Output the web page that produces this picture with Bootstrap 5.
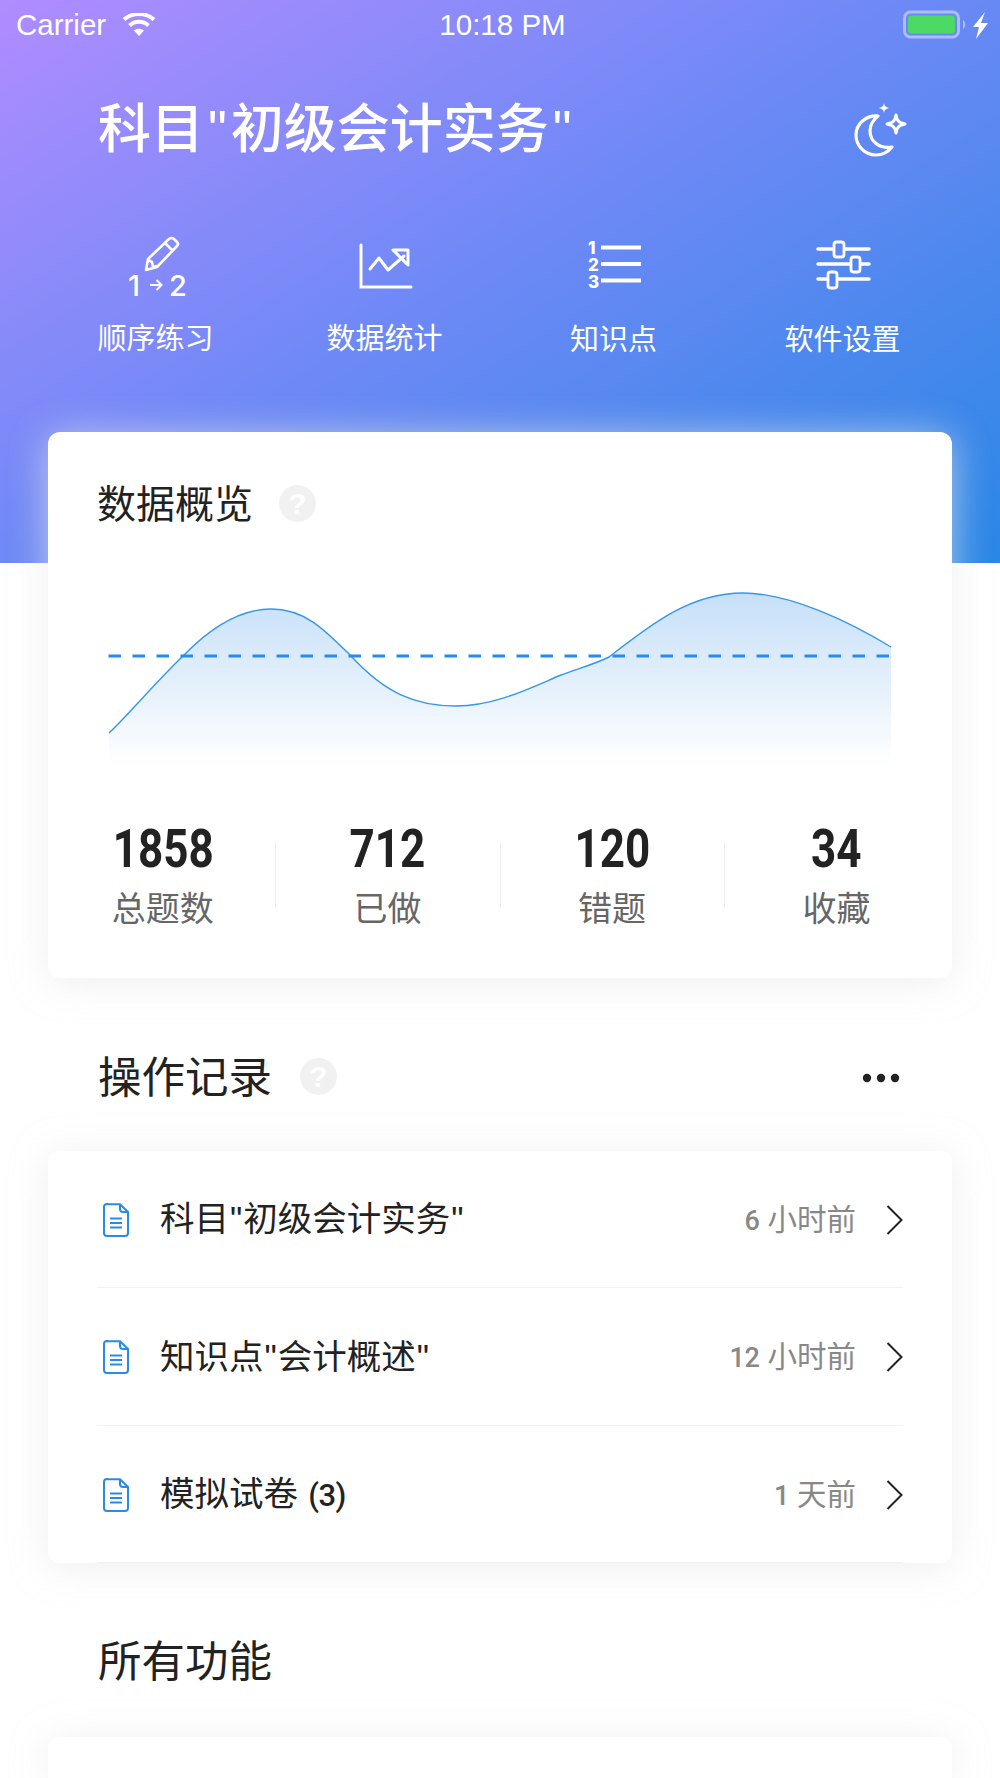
<!DOCTYPE html>
<html lang="zh">
<head>
<meta charset="utf-8">
<title>初级会计实务</title>
<link href="https://cdn.jsdelivr.net/npm/bootstrap@5.3.0/dist/css/bootstrap.min.css" rel="stylesheet">
<style>
html,body{height:1778px;overflow:hidden;background:#fff}
body{font-family:"Liberation Sans","Noto Sans CJK SC",sans-serif;color:#222}
.hero{height:563px;background:linear-gradient(148deg,#b08cff 0%,#7089f6 46%,#2a87e6 100%);color:#fff}
.sbar{height:50px;padding:0 11px 0 16px;font-family:"Liberation Sans",sans-serif;font-size:29.500px}
.sbar-left{width:300px}.sbar-right{width:300px}
.ttl-row{padding:0 92px 0 98px;margin-top:50px;height:60px}
.ttl{font-size:53px;font-weight:500;line-height:60px;margin:0;white-space:nowrap}
.qt{margin:0 4px}
.nav-cols{padding:0 41px;margin-top:76px}
.nav-col{width:229px;text-align:center}
.nav-col svg{display:block;margin:0 auto 13px}
.nav-label{font-size:29px;line-height:38px}
.nav-low{margin-top:4px}
.pane{margin:0 48px;border:0;border-radius:12px;background:#fff;box-shadow:0 4px 38px rgba(232,232,232,.7)}
.pane-one{margin-top:-131px;height:546px;padding:52px 0 0}
.h-one{font-size:39px;line-height:42px;margin:0;font-weight:400}
.qmark{width:37px;height:37px;border-radius:50%;background:#f1f1f1;color:#fff;font-weight:700;font-size:30px;line-height:37px;text-align:center;font-family:"Liberation Sans",sans-serif;margin-top:-3px}
.pane-head{padding-left:49px;gap:26px}
.chart{display:block;margin:64px 0 0 0}
.stat-col{width:224.600px;text-align:center;position:relative}
.stat-col+.stat-col::before{content:"";position:absolute;left:0;top:22px;height:65px;width:1px;background:#eee}
.stat-num{font-family:Roboto,sans-serif;font-weight:700;font-size:53px;line-height:58px;color:#222;transform:scaleX(.83)}
.stat-lbl{font-size:34px;line-height:44px;color:#666;margin-top:9px}
.stats{margin-top:50px;margin-left:2.500px}
.sec{padding:0 100px 0 98px;height:44px}
.sec-one{margin-top:78px;margin-bottom:51px}
.sec-two{margin-top:77px;margin-bottom:53px}
.sec-t{font-size:43.500px;line-height:44px;margin:0;font-weight:400;white-space:nowrap}
.sec-gap{gap:28px}
.pane-two{height:412px;overflow:hidden}
.rec{height:137.300px;padding:0 49px;background:transparent}
.rec-in{height:137.300px;border-bottom:1px solid #f2f2f2;padding:2px 0 0 6px}
.rec-name{font-size:34.500px;margin-left:31px;color:#222}
.rqt{margin:0 1px}
.rec-time{font-size:29.500px;color:#888;margin-right:30px;white-space:nowrap}
.dgt{font-family:Roboto,sans-serif;font-weight:500;font-size:27px;letter-spacing:-.5px}
.par{font-family:Roboto,sans-serif;font-weight:500;font-size:31px;margin-left:3px;letter-spacing:-.5px}
.pane-three{height:41px;border-bottom-left-radius:0;border-bottom-right-radius:0}
</style>
</head>
<body>
<header class="hero">
  <div class="sbar d-flex align-items-center justify-content-between">
    <div class="sbar-left d-flex align-items-center gap-3">
      <span>Carrier</span>
      <svg width="34" height="24" viewBox="0 0 34 24"><path d="M17 23 12 17.500C15 15 19 15 22 17.500Z" fill="#fff"/><path d="M7.500 12.500C13 7.500 21 7.500 26.500 12.500" fill="none" stroke="#fff" stroke-width="4"/><path d="M2 6.500C10.500-.8 23.500-.8 32 6.500" fill="none" stroke="#fff" stroke-width="4"/></svg>
    </div>
    <div>10:18 PM</div>
    <div class="sbar-right d-flex align-items-center justify-content-end">
      <svg width="86" height="30" viewBox="0 0 86 30"><rect x="1.500" y="2" width="54" height="25" rx="6" fill="none" stroke="#fff" stroke-opacity=".45" stroke-width="3"/><rect x="5" y="5.500" width="47" height="18" rx="3" fill="#4cd964"/><path d="M60 10c3 1 3 8 0 9z" fill="#fff" fill-opacity=".45"/><path d="M82 2 70 17h6l-3 12 12-16h-7z" fill="#fff"/></svg>
    </div>
  </div>
  <div class="ttl-row d-flex justify-content-between align-items-center">
    <h1 class="ttl">科目<span class="qt">"</span>初级会计实务<span class="qt">"</span></h1>
    <svg width="56" height="54" viewBox="0 0 56 54"><path d="M26 13C14 12 4 21 4 32c0 11 9 20 20 20 7 0 12-3 16-8-12 2-22-5-22-16 0-6 3-11 8-15z" fill="none" stroke="#fff" stroke-width="3.200" stroke-linejoin="round"/><path d="M44 12c1 6 3 8 9 9-6 1-8 3-9 9-1-6-3-8-9-9 6-1 8-3 9-9z" fill="none" stroke="#fff" stroke-width="3" stroke-linejoin="round"/><path d="M32 0c.6 3 1.500 4 5 5-3.500 1-4.400 2-5 5-.6-3-1.500-4-5-5 3.500-1 4.400-2 5-5z" fill="#fff"/></svg>
  </div>
  <div class="nav-cols d-flex">
    <div class="nav-col">
      <svg width="90" height="71" viewBox="0 0 90 71"><path d="M35 34 37 23 58 3Q61 1 63 3L66 6Q68 8 66 10L46 31ZM54 7 62 15M37 24 41 26 42 31 46 30" fill="none" stroke="#fff" stroke-width="2.600" stroke-linejoin="round"/><text x="17" y="60" font-family="Inter,sans-serif" font-size="29" font-weight="500" fill="#fff">1</text><path d="M39 49H50M45.500 44 50.500 49 45.500 54" fill="none" stroke="#fff" stroke-width="2"/><text x="58" y="60" font-family="Inter,sans-serif" font-size="29" font-weight="500" fill="#fff">2</text></svg>
      <div class="nav-label nav-low">顺序练习</div>
    </div>
    <div class="nav-col">
      <svg width="60" height="71" viewBox="0 0 60 71"><path d="M6 9V51H56" fill="none" stroke="#fff" stroke-width="3" stroke-linecap="round"/><path d="M15 33 24 22 33 34 49 20" fill="none" stroke="#fff" stroke-width="3" stroke-linecap="round" stroke-linejoin="round"/><path d="M38 14H53V29Z" fill="none" stroke="#fff" stroke-width="3" stroke-linejoin="round"/></svg>
      <div class="nav-label nav-low">数据统计</div>
    </div>
    <div class="nav-col">
      <svg width="60" height="72" viewBox="0 0 60 72"><text x="4" y="18" font-family="Inter,sans-serif" font-size="17" font-weight="800" fill="#fff">1</text><text x="4" y="35" font-family="Inter,sans-serif" font-size="17" font-weight="800" fill="#fff">2</text><text x="4" y="52" font-family="Inter,sans-serif" font-size="17" font-weight="800" fill="#fff">3</text><path d="M17 11.500H57M17 28H57M17 44.500H57" stroke="#fff" stroke-width="4"/></svg>
      <div class="nav-label">知识点</div>
    </div>
    <div class="nav-col">
      <svg width="60" height="72" viewBox="0 0 60 72"><path d="M5 13H56M5 28H56M5 43H56" stroke="#fff" stroke-width="3.500" stroke-linecap="round"/><rect x="21" y="6" width="10" height="15" rx="2.500" fill="#5f88f2" stroke="#fff" stroke-width="2.800"/><rect x="38" y="21" width="9" height="15" rx="2.500" fill="#5585ef" stroke="#fff" stroke-width="2.800"/><rect x="15" y="36" width="9" height="16" rx="2.500" fill="#5585ef" stroke="#fff" stroke-width="2.800"/></svg>
      <div class="nav-label">软件设置</div>
    </div>
  </div>
</header>
<main>
  <section class="card pane pane-one">
    <div class="pane-head d-flex align-items-center">
      <h2 class="h-one">数据概览</h2>
      <div class="qmark">?</div>
    </div>
    <svg class="chart" width="904" height="180" viewBox="48 590 904 180">
      <defs><linearGradient id="ga" x1="0" y1="590" x2="0" y2="765" gradientUnits="userSpaceOnUse"><stop offset="0" stop-color="#c5dff8"/><stop offset="1" stop-color="#fff"/></linearGradient></defs>
      <path d="M109 733C128 715 155 683 183 656C210 628 240 609 271 609C305 609 325 630 351 656C385 693 415 706 456 706C495 706 530 688 561 675C580 668 595 664 609 657C650 625 690 593 743 593C790 593 850 622 891 647V770H109Z" fill="url(#ga)"/>
      <path d="M109 733C128 715 155 683 183 656C210 628 240 609 271 609C305 609 325 630 351 656C385 693 415 706 456 706C495 706 530 688 561 675C580 668 595 664 609 657C650 625 690 593 743 593C790 593 850 622 891 647" fill="none" stroke="#3596ec" stroke-width="1.400"/>
      <path d="M108.500 656H891" stroke="#2a8ae8" stroke-width="3" stroke-dasharray="12.500 11.500"/>
    </svg>
    <div class="stats d-flex">
      <div class="stat-col"><div class="stat-num">1858</div><div class="stat-lbl">总题数</div></div>
      <div class="stat-col"><div class="stat-num">712</div><div class="stat-lbl">已做</div></div>
      <div class="stat-col"><div class="stat-num">120</div><div class="stat-lbl">错题</div></div>
      <div class="stat-col"><div class="stat-num">34</div><div class="stat-lbl">收藏</div></div>
    </div>
  </section>
  <div class="sec sec-one d-flex align-items-center justify-content-between">
    <div class="d-flex align-items-center sec-gap"><h2 class="sec-t">操作记录</h2><div class="qmark">?</div></div>
    <svg width="38" height="10" viewBox="0 0 38 10"><circle cx="5" cy="5" r="4.200" fill="#222"/><circle cx="19" cy="5" r="4.200" fill="#222"/><circle cx="33" cy="5" r="4.200" fill="#222"/></svg>
  </div>
  <section class="card pane pane-two">
    <div class="list-group list-group-flush">
      <div class="list-group-item rec border-0"><div class="rec-in d-flex align-items-center">
        <svg width="26" height="34" viewBox="0 0 26 34"><path d="M4 1.200H17L25 9V30a3 3 0 0 1-3 3H4a3 3 0 0 1-3-3V4a3 3 0 0 1 3-3z" fill="none" stroke="#2a8ae8" stroke-width="2"/><path d="M17 1.200V6a3 3 0 0 0 3 3h5M7 15.500H19M7 20H19M7 24.500H19" fill="none" stroke="#2a8ae8" stroke-width="2"/></svg>
        <span class="rec-name flex-grow-1">科目<span class="rqt">"</span>初级会计实务<span class="rqt">"</span></span>
        <span class="rec-time"><span class="dgt">6</span> 小时前</span>
        <svg width="17" height="30" viewBox="0 0 17 30"><path d="M1.500 1 15.500 15 1.500 29" fill="none" stroke="#222" stroke-width="2"/></svg>
      </div></div>
      <div class="list-group-item rec border-0"><div class="rec-in d-flex align-items-center">
        <svg width="26" height="34" viewBox="0 0 26 34"><path d="M4 1.200H17L25 9V30a3 3 0 0 1-3 3H4a3 3 0 0 1-3-3V4a3 3 0 0 1 3-3z" fill="none" stroke="#2a8ae8" stroke-width="2"/><path d="M17 1.200V6a3 3 0 0 0 3 3h5M7 15.500H19M7 20H19M7 24.500H19" fill="none" stroke="#2a8ae8" stroke-width="2"/></svg>
        <span class="rec-name flex-grow-1">知识点<span class="rqt">"</span>会计概述<span class="rqt">"</span></span>
        <span class="rec-time"><span class="dgt">12</span> 小时前</span>
        <svg width="17" height="30" viewBox="0 0 17 30"><path d="M1.500 1 15.500 15 1.500 29" fill="none" stroke="#222" stroke-width="2"/></svg>
      </div></div>
      <div class="list-group-item rec border-0"><div class="rec-in d-flex align-items-center">
        <svg width="26" height="34" viewBox="0 0 26 34"><path d="M4 1.200H17L25 9V30a3 3 0 0 1-3 3H4a3 3 0 0 1-3-3V4a3 3 0 0 1 3-3z" fill="none" stroke="#2a8ae8" stroke-width="2"/><path d="M17 1.200V6a3 3 0 0 0 3 3h5M7 15.500H19M7 20H19M7 24.500H19" fill="none" stroke="#2a8ae8" stroke-width="2"/></svg>
        <span class="rec-name flex-grow-1">模拟试卷<span class="par"> (3)</span></span>
        <span class="rec-time"><span class="dgt">1</span> 天前</span>
        <svg width="17" height="30" viewBox="0 0 17 30"><path d="M1.500 1 15.500 15 1.500 29" fill="none" stroke="#222" stroke-width="2"/></svg>
      </div></div>
    </div>
  </section>
  <div class="sec sec-two d-flex align-items-center"><h2 class="sec-t">所有功能</h2></div>
  <section class="card pane pane-three"></section>
</main>
<script src="https://cdn.jsdelivr.net/npm/bootstrap@5.3.0/dist/js/bootstrap.bundle.min.js"></script>
</body>
</html>
